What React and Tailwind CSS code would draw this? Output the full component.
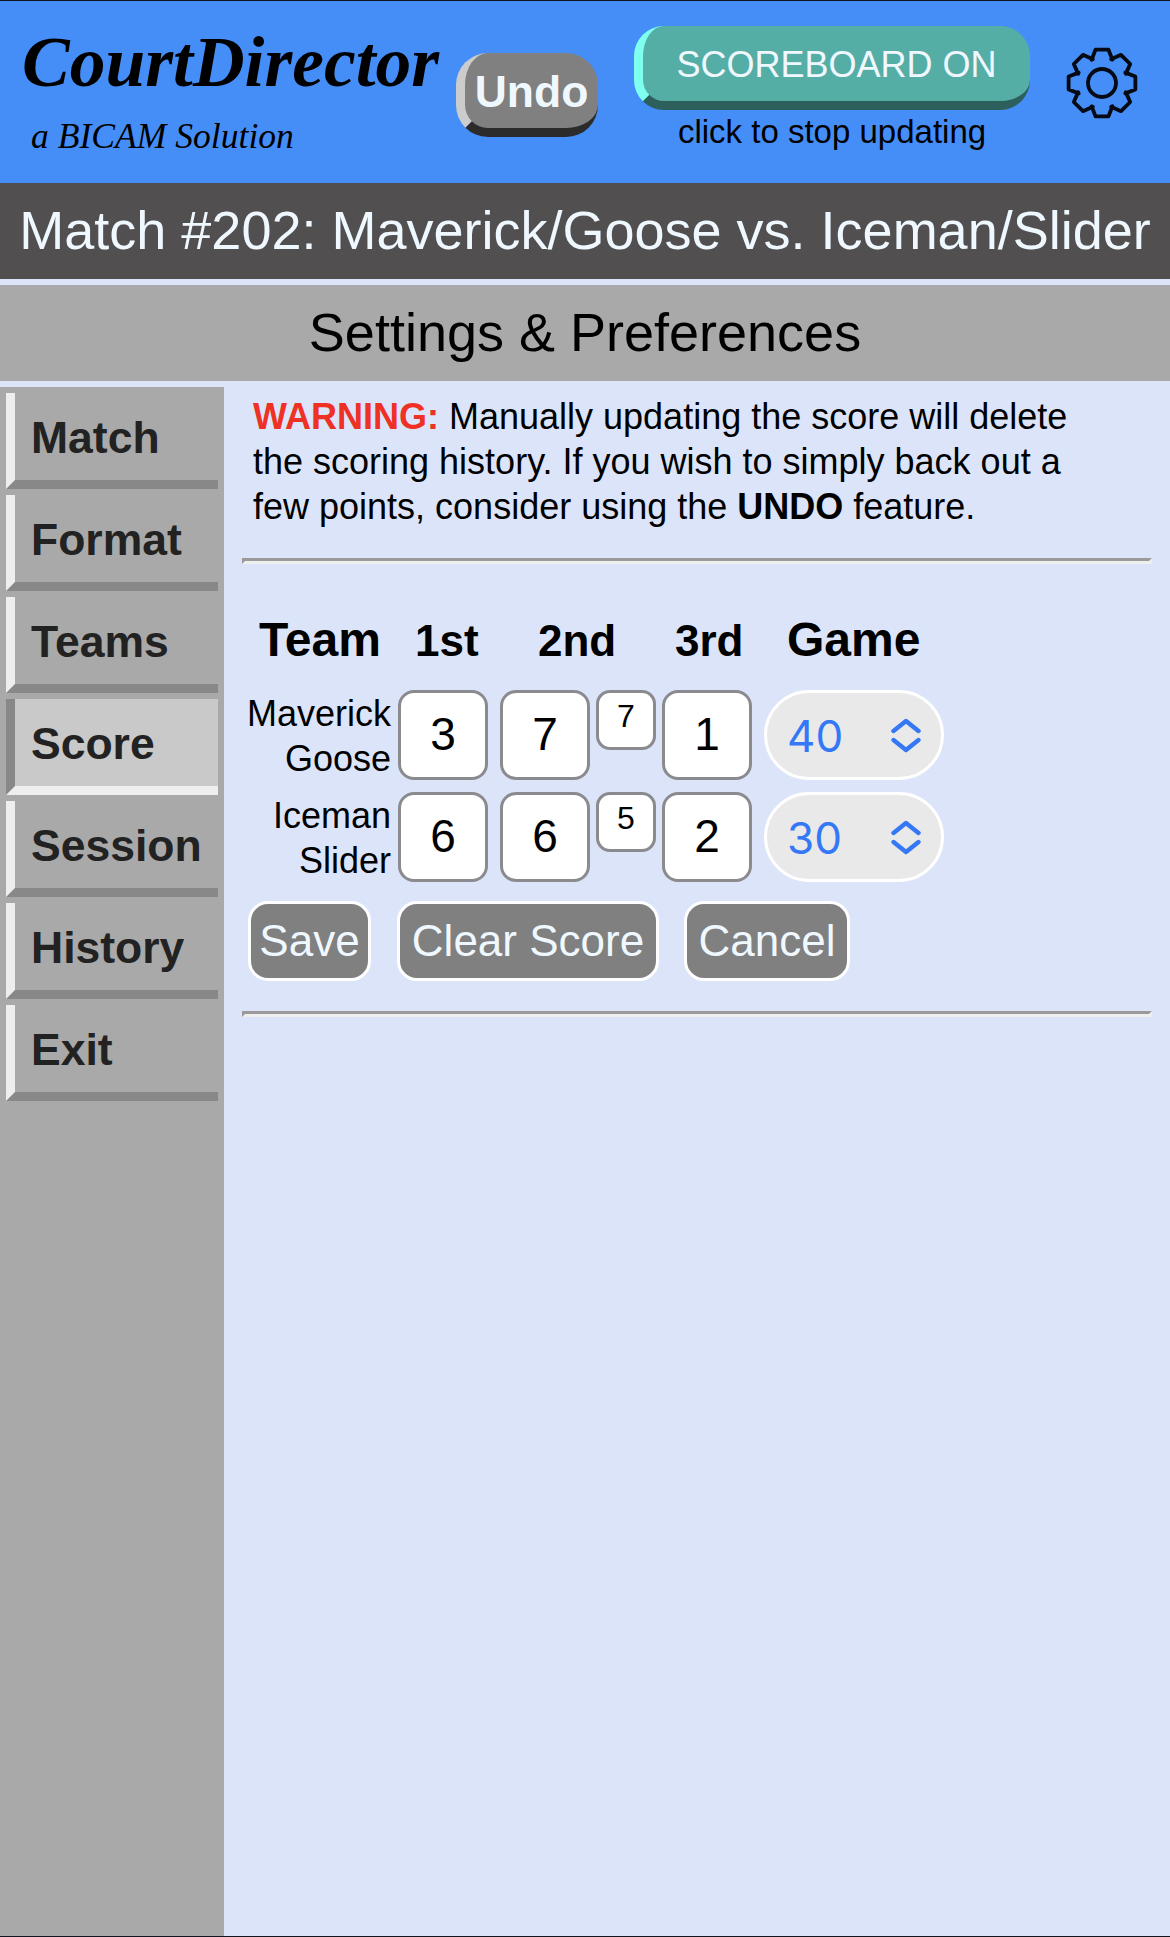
const sans = 'font-["Liberation_Sans",Arial,sans-serif]';

const navItems = ['Match', 'Format', 'Teams', 'Score', 'Session', 'History', 'Exit'];

const scoreRows = [
  { names: ['Maverick', 'Goose'], first: '3', second: '7', tie: '7', third: '1', game: '40' },
  { names: ['Iceman', 'Slider'], first: '6', second: '6', tie: '5', third: '2', game: '30' },
];

// 8 tooth gear outline, worked out from polar points
function gearPath() {
  const pts = [];
  for (let k = 0; k < 8; k++) {
    const a = (k * 45 - 90) * (Math.PI / 180);
    const d = Math.PI / 180;
    [[-24, 25.5], [-11, 34], [11, 34], [24, 25.5]].forEach(([off, r]) => {
      pts.push(`${(37 + r * Math.cos(a + off * d)).toFixed(2)} ${(37 + r * Math.sin(a + off * d)).toFixed(2)}`);
    });
  }
  return `M${pts.join('L')}Z`;
}

function Gear() {
  return (
    <svg width="74" height="74" viewBox="0 0 74 74" fill="none" stroke="#050a14" strokeWidth="3.8" strokeLinejoin="round" className="block">
      <path d={gearPath()} />
      <circle cx="37" cy="37" r="14" />
    </svg>
  );
}

function Chevrons() {
  return (
    <svg width="30" height="35" viewBox="0 0 30 35" fill="none" stroke="#3478f6" strokeWidth="4.4" strokeLinecap="round" strokeLinejoin="round">
      <path d="M2.5 13 15 3l12.5 10" />
      <path d="M2.5 22 15 32l12.5-10" />
    </svg>
  );
}

function NavButton({ label }) {
  const active = label === 'Score';
  return (
    <div
      className={`w-[212px] h-[96px] mb-[6px] box-border border-l-[9px] border-b-[9px] pl-[16px] pt-[3px] flex items-center text-[44.5px] font-bold text-[#222222] ${
        active ? 'bg-[#c9c9c9] border-l-[#888888] border-b-[#eeeeee]' : 'bg-[#a9a9a9] border-l-[#eeeeee] border-b-[#888888]'
      }`}
    >
      {label}
    </div>
  );
}

function Divider() {
  return <div className="w-[910px] h-[6px] box-border border-[3px] border-t-[#9a9a9a] border-l-[#9a9a9a] border-b-[#eeeeee] border-r-[#eeeeee]" />;
}

function ScoreBox({ value }) {
  return (
    <div className="w-[90px] h-[90px] box-border bg-white border-[3px] border-[#8a8a8f] rounded-[16px] pb-[2px] flex items-center justify-center text-[46px] text-black">
      {value}
    </div>
  );
}

function ScoreRow({ row }) {
  return (
    <div className="flex h-[90px]">
      <div className="w-[155px] ml-[-7px] pt-[1px] text-right text-[36px] leading-[45px] text-black">
        <div>{row.names[0]}</div>
        <div>{row.names[1]}</div>
      </div>
      <div className="ml-[7px]"><ScoreBox value={row.first} /></div>
      <div className="ml-[12px]"><ScoreBox value={row.second} /></div>
      <div className="ml-[6px] w-[60px] h-[60px] box-border bg-white border-[3px] border-[#8a8a8f] rounded-[14px] flex items-center justify-center text-[32px] text-black pb-[8px]">
        {row.tie}
      </div>
      <div className="ml-[6px]"><ScoreBox value={row.third} /></div>
      <div className="ml-[12px] w-[180px] h-[90px] box-border bg-[#e9e9e9] border-[3px] border-white rounded-full flex items-center pl-[20px] pr-[20px] justify-between">
        <span className='font-["Inter",sans-serif] text-[44px] text-[#3478f6] pt-[2px]'>{row.game}</span>
        <Chevrons />
      </div>
    </div>
  );
}

function ActionButton({ label, width, className = '' }) {
  return (
    <div className={`h-[80px] box-border bg-[#808080] border-[3px] border-white rounded-[20px] flex items-center justify-center text-[44px] text-[#f0f8ff] ${width} ${className}`}>
      {label}
    </div>
  );
}

export default function App() {
  return (
    <div className={`w-[1170px] h-[1937px] box-border flex flex-col bg-[#dbe4f8] border-t border-b border-[#10151f] overflow-hidden ${sans}`}>
      <header className="h-[182px] shrink-0 bg-[#458ef8] flex">
        <div className='w-[434px] ml-[22px] pt-[25px] font-["Liberation_Serif","Times_New_Roman",serif] italic text-black whitespace-nowrap'>
          <div className="text-[71.5px] leading-[72px] font-bold">CourtDirector</div>
          <div className="text-[35.6px] leading-[40px] mt-[18px] ml-[9px]">a BICAM Solution</div>
        </div>

        <div className="mt-[52px] w-[142px] h-[84px] box-border bg-[#808080] border-l-[9px] border-b-[9px] border-l-[#cccccc] border-b-[#2b2b2b] rounded-[32px] pt-[3px] flex items-center justify-center text-[44.5px] font-bold text-[#f0f8ff]">
          Undo
        </div>

        <div className="ml-[36px] w-[396px] mt-[25px]">
          <div className="h-[84px] box-border bg-[#55aea6] border-l-[9px] border-b-[9px] border-l-[#7fffee] border-b-[#2d5f5c] rounded-[30px] pt-[2px] flex items-center justify-center text-[36px] text-[#f0f8ff] whitespace-nowrap">
            SCOREBOARD ON
          </div>
          <div className="text-center text-[33px] leading-[40px] mt-[2px] text-black whitespace-nowrap">click to stop updating</div>
        </div>

        <div className="ml-[35px] mt-[45px]">
          <Gear />
        </div>
      </header>

      <div className="h-[96px] shrink-0 bg-[#514f50] pb-[2px] flex items-center justify-center text-[54px] text-[#f0f8ff] whitespace-nowrap">
        Match #202: Maverick/Goose vs. Iceman/Slider
      </div>

      <div className="h-[96px] shrink-0 mt-[6px] bg-[#a9a9a9] pb-[2px] flex items-center justify-center text-[54px] text-black">
        Settings &amp; Preferences
      </div>

      <div className="flex-1 flex mt-[6px] min-h-0">
        <nav className="w-[224px] shrink-0 bg-[#a9a9a9] pl-[6px] pt-[6px]">
          {navItems.map((item) => (
            <NavButton key={item} label={item} />
          ))}
        </nav>

        <main className="flex-1 pl-[18px]">
          <p className="pl-[11px] pt-[7px] text-[36px] leading-[45px] text-black w-[900px]">
            <span className="font-bold text-[#ee3124]">WARNING:</span> Manually updating the score will delete
            <br />
            the scoring history. If you wish to simply back out a
            <br />
            few points, consider using the <span className="font-bold">UNDO</span> feature.
          </p>
          <div className="mt-[29px]">
            <Divider />
          </div>

          <div className="mt-[52px] ml-[17px] flex items-baseline font-bold text-black leading-[48px]">
            <div className="w-[156px] text-[48px]">Team</div>
            <div className="w-[123px] text-[44px]">1st</div>
            <div className="w-[137px] text-[44px]">2nd</div>
            <div className="w-[112px] text-[44px]">3rd</div>
            <div className="text-[48px]">Game</div>
          </div>

          <div className="mt-[25px] flex flex-col gap-[12px] ml-[1px]">
            {scoreRows.map((row) => (
              <ScoreRow key={row.names[0]} row={row} />
            ))}
          </div>

          <div className="mt-[19px] ml-[6px] flex">
            <ActionButton label="Save" width="w-[123px]" />
            <ActionButton label="Clear Score" width="w-[262px]" className="ml-[26px]" />
            <ActionButton label="Cancel" width="w-[166px]" className="ml-[25px]" />
          </div>

          <div className="mt-[30px]">
            <Divider />
          </div>
        </main>
      </div>
    </div>
  );
}
